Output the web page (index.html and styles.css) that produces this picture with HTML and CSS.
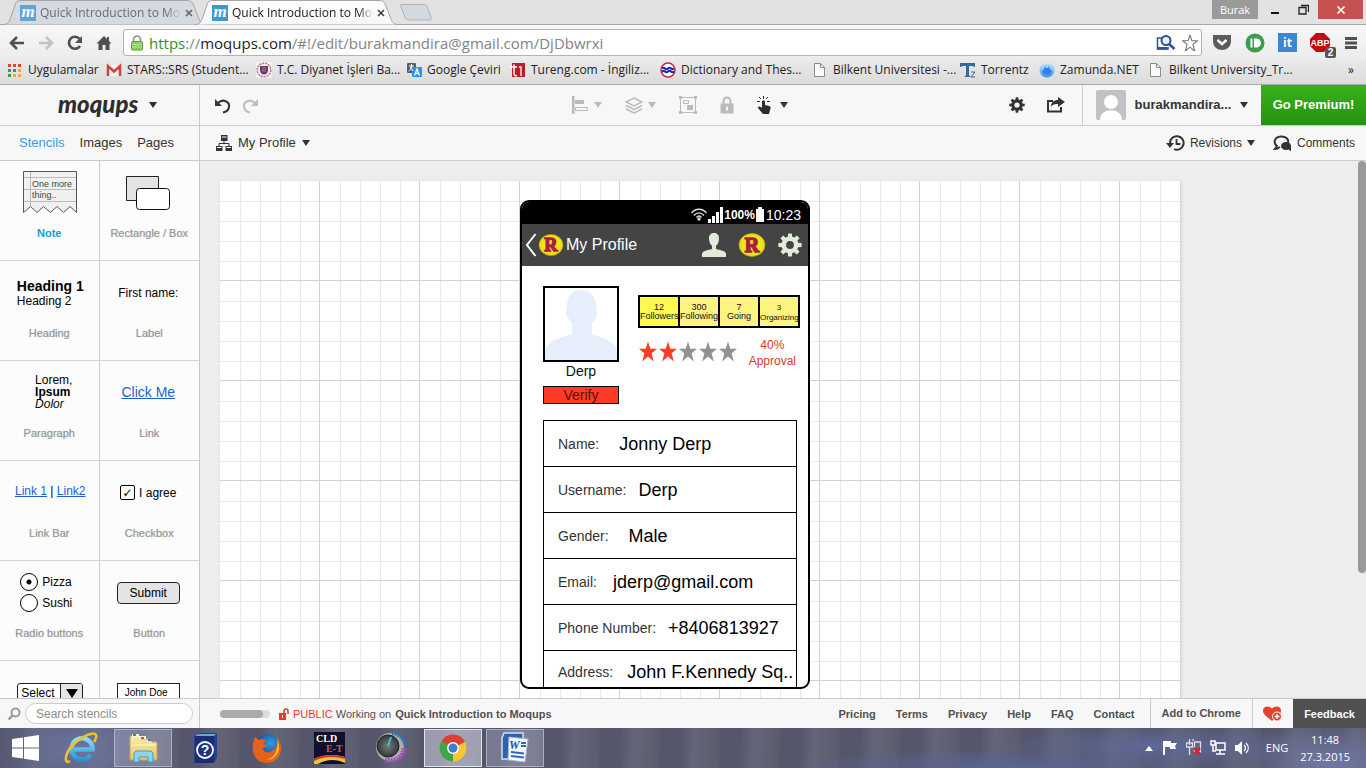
FILE: index.html
```html
<!DOCTYPE html>
<html lang="en">
<head>
<meta charset="utf-8">
<title>Quick Introduction to Moqups</title>
<link rel="stylesheet" href="styles.css">
</head>
<body>
<svg width="0" height="0" class="defs" aria-hidden="true">
  <defs>
    <linearGradient id="gTab" x1="0" y1="0" x2="0" y2="1"><stop offset="0" stop-color="#fdfdfd"/><stop offset="1" stop-color="#f6f6f6"/></linearGradient>
    <linearGradient id="gIE" gradientUnits="userSpaceOnUse" x1="0" y1="4" x2="0" y2="30"><stop offset="0" stop-color="#9be4fb"/><stop offset="1" stop-color="#1c8fd6"/></linearGradient>
    <linearGradient id="gFold" x1="0" y1="0" x2="0" y2="1"><stop offset="0" stop-color="#f9ecae"/><stop offset="1" stop-color="#e5c765"/></linearGradient>
    <radialGradient id="gFox" cx=".6" cy=".35" r=".6"><stop offset="0" stop-color="#2f9fe0"/><stop offset="1" stop-color="#1b3f87"/></radialGradient>
    <radialGradient id="gKnob"><stop offset="0" stop-color="#777d7d"/><stop offset="1" stop-color="#33383a"/></radialGradient>
    <linearGradient id="gZam" x1="0" y1="0" x2="0" y2="1"><stop offset="0" stop-color="#d5eafd"/><stop offset="1" stop-color="#3d8fe8"/></linearGradient>
    <radialGradient id="gR"><stop offset="0" stop-color="#fff12a"/><stop offset="1" stop-color="#eadc16"/></radialGradient>
    <symbol id="tabShape" viewBox="0 0 204 25"><path d="M0 24.500C5 24.500 6 22 7.500 18L12 5C13.500 1.500 14 .5 18 .5H184C188 .5 189 1.500 190.500 5L196 19C197.500 23 199 24.500 204 24.500" stroke="#a5a5a5"/></symbol>
    <symbol id="page" viewBox="0 0 16 16"><path d="M2.500 1.500h6l4 4v9h-10z" fill="#fafafa" stroke="#8b8b8b"/><path d="M8.500 1.500v4h4" fill="none" stroke="#8b8b8b"/></symbol>
    <symbol id="star" viewBox="0 0 20 20"><path d="M10 0l2.300 7.300H19l-5.400 4.400 2.200 8.300L10 15.100 4.200 20l2.200-8.300L1 7.300h6.700z"/></symbol>
    <symbol id="rlogo" viewBox="0 0 28 24"><ellipse cx="14" cy="12" rx="13" ry="11.500" fill="url(#gR)" stroke="#b3a516" stroke-width=".7"/><text x="14" y="19" text-anchor="middle" font-family="Liberation Serif, serif" font-weight="bold" font-size="20" fill="#a91f3d" stroke="#a91f3d" stroke-width="1.500">R</text><path d="M12 7.500h3v3h-3z" fill="#e9c93a"/></symbol>
    <symbol id="gear" viewBox="-12 -12 24 24"><circle r="6.200" fill="none" stroke="currentColor" stroke-width="4.600"/><g fill="currentColor"><path id="tooth" d="M-1.900-11.600h3.800l.4 4.600h-4.600z"/><use href="#tooth" transform="rotate(45)"/><use href="#tooth" transform="rotate(90)"/><use href="#tooth" transform="rotate(135)"/><use href="#tooth" transform="rotate(180)"/><use href="#tooth" transform="rotate(225)"/><use href="#tooth" transform="rotate(270)"/><use href="#tooth" transform="rotate(315)"/></g></symbol>
  </defs>
</svg>

<header class="browser">
  <div class="tabstrip">
    <div class="tab tab-idle">
      <svg class="tab-bg"><use href="#tabShape"/></svg>
      <span class="m-icon">m</span><span class="tab-title">Quick Introduction to Moqups</span>
      <button class="tab-close" aria-label="Close tab"><svg width="8" height="8"><path d="M1 1l6 6M7 1L1 7" stroke="#666" stroke-width="1.700"/></svg></button>
    </div>
    <div class="tab tab-active">
      <svg class="tab-bg"><use href="#tabShape"/></svg>
      <span class="m-icon">m</span><span class="tab-title">Quick Introduction to Moqups</span>
      <button class="tab-close" aria-label="Close tab"><svg width="8" height="8"><path d="M1 1l6 6M7 1L1 7" stroke="#444" stroke-width="1.700"/></svg></button>
    </div>
    <button class="newtab" aria-label="New tab"><svg width="34" height="17"><path d="M3.500.5h22c2 0 3 .5 4 3l3.500 10c.5 2 0 2.500-2 2.500h-20c-2 0-3-.5-4-3l-4-10c-.5-2-1.500-2.500.5-2.500z" fill="#d3d9e1" stroke="#b0b0b0"/></svg></button>
    <div class="window-controls">
      <span class="profile">Burak</span>
      <button aria-label="Minimize"><svg width="10" height="10"><path d="M1 8h8" stroke="#111" stroke-width="2"/></svg></button>
      <button aria-label="Restore"><svg width="11" height="11"><path d="M1 3.500h7v6.500H1zM3 1.500h7.500V8" fill="none" stroke="#222" stroke-width="1.300"/></svg></button>
      <button class="win-close" aria-label="Close"><svg width="10" height="10"><path d="M1.500 1.500l7 7M8.500 1.500l-7 7" stroke="#fff" stroke-width="1.700"/></svg></button>
    </div>
  </div>
  <div class="toolbar">
    <div class="nav">
      <button aria-label="Back"><svg width="18" height="16"><path d="M16 8H4M9 2L3 8l6 6" fill="none" stroke="#505050" stroke-width="2.600"/></svg></button>
      <button aria-label="Forward"><svg width="18" height="16"><path d="M2 8h12M9 2l6 6-6 6" fill="none" stroke="#c2c2c2" stroke-width="2.600"/></svg></button>
      <button aria-label="Reload"><svg width="18" height="16"><path d="M13.500 3.800A6 6 0 1 0 14 11" fill="none" stroke="#505050" stroke-width="2.700"/><path d="M16 1v7H9z" fill="#505050"/></svg></button>
      <button aria-label="Home"><svg width="18" height="16"><path d="M9 1L1.500 8.500h2V15h4v-5h3v5h4V8.500h2L14 6V2h-2v2z" fill="#505050"/></svg></button>
    </div>
    <div class="omnibox">
      <svg width="14" height="16"><path d="M3.500 8V4.500a3.500 3.500 0 0 1 7 0V8" fill="none" stroke="#929292" stroke-width="1.700"/><rect x="1.500" y="6.500" width="11" height="8.500" rx="1" fill="#8bd05d" stroke="#5da236"/><path d="M2 9.500h10M2 12h10" stroke="#b8e891"/></svg>
      <a class="url" href="#"><span class="secure">https</span>://<span class="host">moqups.com</span>/#!/edit/burakmandira@gmail.com/DjDbwrxi</a>
      <svg width="20" height="17"><path d="M6 4H1.500v11H12v-2" fill="none" stroke="#30509a" stroke-width="1.500"/><path d="M1 13h10v2.500H1z" fill="#30509a"/><circle cx="10" cy="6.500" r="4.500" fill="#e8f0ff" stroke="#30509a" stroke-width="2"/><path d="M13 10l5.500 5" stroke="#30509a" stroke-width="2.500"/></svg>
      <svg width="18" height="18" viewBox="-1 -1 22 22" fill="#fff" stroke="#777" stroke-width="1.400"><use href="#star" width="20" height="20" overflow="visible"/></svg>
    </div>
    <div class="extensions">
      <button aria-label="Pocket"><svg width="20" height="19"><path d="M1 2h18v6c0 12-18 12-18 0z" fill="#5b5b5b"/><path d="M5.500 7l4.500 4 4.500-4" fill="none" stroke="#fff" stroke-width="2.500"/></svg></button>
      <button aria-label="Pushbullet"><svg width="20" height="20"><circle cx="10" cy="10" r="9.500" fill="#3e9b4e"/><path d="M5.500 5.500h2v9h-2zM9 5.500h2.500a4.500 4.500 0 0 1 0 9H9z" fill="#fff"/></svg></button>
      <button class="ext-it" aria-label="Instant translate">it</button>
      <button class="ext-abp" aria-label="Adblock Plus"><svg width="21" height="20"><path d="M6 0h8l6 6v7l-6 6H6l-6-6V6z" fill="#c40a12"/><text x="10" y="13" text-anchor="middle" font-family="Liberation Sans, sans-serif" font-weight="bold" font-size="9" fill="#fff">ABP</text></svg><span class="ext-count">2</span></button>
      <button aria-label="Menu"><svg width="14" height="14"><path d="M1 2.500h12M1 7h12M1 11.500h12" stroke="#505050" stroke-width="3"/></svg></button>
    </div>
  </div>
  <nav class="bookmarks" aria-label="Bookmarks">
    <a href="#"><svg width="16" height="16"><path d="M1 2h3v3H1zM6 2h3v3H6z" fill="#d8453a"/><path d="M11 2h3v3h-3z" fill="#d8453a"/><path d="M1 7h3v3H1z" fill="#39964d"/><path d="M6 7h3v3H6z" fill="#3a7be0"/><path d="M11 7h3v3h-3zM11 12h3v3h-3zM6 12h3v3H6z" fill="#e7b226"/><path d="M1 12h3v3H1z" fill="#39964d"/></svg>Uygulamalar</a>
    <a href="#"><svg width="16" height="16"><path d="M1 3h14v11H1z" fill="#f4f1f0"/><path d="M2 14V4l6 5.500L14 4v10" fill="none" stroke="#cf4438" stroke-width="2.500"/></svg>STARS::SRS (Student...</a>
    <a href="#"><svg width="16" height="16"><rect width="16" height="16" fill="#f6eff1"/><circle cx="8" cy="8" r="6.800" fill="none" stroke="#ba778b" stroke-width="1.500" stroke-dasharray="2 1"/><path d="M4 4h8v4c0 6-8 6-8 0z" fill="#524474"/><path d="M6 5h4v5H6z" fill="#b44b5e"/></svg>T.C. Diyanet İşleri Ba...</a>
    <a href="#"><svg width="16" height="16"><rect x="1" y="1" width="9" height="10" rx="1" fill="#555e68"/><rect x="6" y="5" width="10" height="10" rx="1" fill="#2d91e8"/><path d="M3 4h5M5.500 2v2c0 3-1 4-3 5M4 5l3 4" stroke="#fff" fill="none"/><path d="M8.500 13.500L11 7l2.500 6.500M9.500 11.500h3" stroke="#fff" stroke-width="1.300" fill="none"/></svg>Google Çeviri</a>
    <a href="#"><svg width="16" height="16"><rect x="2" y="1" width="13" height="14" fill="#be1c2c"/><path d="M0 5h7M4 2.500v9c0 2 1 2.500 3 2" stroke="#fff" stroke-width="1.500" fill="none"/><path d="M9 5h2v9" stroke="#fff" stroke-width="1.300" fill="none"/></svg>Tureng.com - İngiliz...</a>
    <a href="#"><svg width="16" height="16"><circle cx="8" cy="8" r="7" fill="#fff" stroke="#d42533" stroke-width="1.500"/><path d="M2 6.500q1.500-1.500 3 0t3 0 3 0 3 0M2 9.500q1.500-1.500 3 0t3 0 3 0 3 0" fill="none" stroke="#1726b9" stroke-width="1.900"/></svg>Dictionary and Thes...</a>
    <a href="#"><svg width="16" height="16"><use href="#page"/></svg>Bilkent Universitesi -...</a>
    <a href="#"><svg width="16" height="16"><path d="M0 1h15v4h-1l-1-1H9v9c0 1 1 1 2 2H4c1-1 2-1 2-2V4H2L1 5H0z" fill="#356998"/><path d="M11 10h4l-4 5h4" fill="none" stroke="#356998"/></svg>Torrentz</a>
    <a href="#"><svg width="16" height="16"><circle cx="8" cy="8" r="7.500" fill="url(#gZam)"/><path d="M3 9c3-1 2-6 5-6s2 5 5 6c-1 5-9 5-10 0z" fill="#2e82e6"/><circle cx="8" cy="4.500" r="1.500" fill="#b8dcff"/></svg>Zamunda.NET</a>
    <a href="#"><svg width="16" height="16"><use href="#page"/></svg>Bilkent University_Tr...</a>
    <button aria-label="More bookmarks">»</button>
  </nav>
</header>

<main class="app">
  <aside class="sidebar">
    <div class="brand"><span class="logo">moqups</span><span class="caret"></span></div>
    <nav class="side-tabs"><a class="current" href="#">Stencils</a><a href="#">Images</a><a href="#">Pages</a></nav>
    <div class="stencils">
      <div class="cell"><div class="demo"><svg width="54" height="44"><path d="M.5 41.500V.5h53v41l-6.500-6-6.500 6-6.500-6-6.500 6-7-6-6.500 6-6.500-6z" fill="#f0f0f0" stroke="#555"/><path d="M1 6.500h52M1 18.500h52M1 30.500h52M7.500 1v34" stroke="#bbb"/><text x="9" y="16" class="note-text">One more</text><text x="9" y="27" class="note-text">thing..</text></svg></div><span class="cap cap-on">Note</span></div>
      <div class="cell"><div class="demo"><svg width="46" height="36"><path d="M1.500 1.500h32v24h-32z" fill="#e4e4e4" stroke="#222"/><rect x="11.500" y="13.500" width="33" height="21" rx="3" fill="#fff" stroke="#111"/></svg></div><span class="cap">Rectangle / Box</span></div>
      <div class="cell"><div class="demo"><div class="d-head"><b>Heading 1</b><br>Heading 2</div></div><span class="cap">Heading</span></div>
      <div class="cell"><div class="demo">First name:</div><span class="cap">Label</span></div>
      <div class="cell"><div class="demo"><div class="d-par">Lorem,<br><b>Ipsum</b><br><i>Dolor</i></div></div><span class="cap">Paragraph</span></div>
      <div class="cell"><div class="demo"><a class="d-link" href="#">Click Me</a></div><span class="cap">Link</span></div>
      <div class="cell"><div class="demo d-bar"><a href="#">Link 1</a> | <a href="#">Link2</a></div><span class="cap">Link Bar</span></div>
      <div class="cell"><div class="demo"><label class="choice"><input type="checkbox" checked>I agree</label></div><span class="cap">Checkbox</span></div>
      <div class="cell"><div class="demo d-radios"><label class="choice"><input type="radio" name="food" checked>Pizza</label><label class="choice"><input type="radio" name="food">Sushi</label></div><span class="cap">Radio buttons</span></div>
      <div class="cell"><div class="demo"><button class="d-submit">Submit</button></div><span class="cap">Button</span></div>
      <div class="cell"><div class="demo"><div class="d-select"><select aria-label="Select"><option>Select</option></select><svg width="22" height="20"><path d="M5 5h12l-6 9z"/></svg></div></div></div>
      <div class="cell"><div class="demo"><input class="d-input" type="text" value="John Doe" aria-label="Text input"></div></div>
    </div>
    <div class="search"><svg width="14" height="14"><circle cx="8.500" cy="5.500" r="4" fill="none" stroke="#999" stroke-width="2"/><path d="M5.500 8.500L1.500 12.500" stroke="#999" stroke-width="2.400"/></svg><input type="search" placeholder="Search stencils" aria-label="Search stencils"></div>
  </aside>

  <section class="editor">
    <div class="topbar">
      <div class="history">
        <button aria-label="Undo"><svg width="18" height="17"><path d="M4 6c5-5 12-1 11 4-.5 3-3 5-6 5.500" fill="none" stroke="#333" stroke-width="2"/><path d="M1 2v7h7z" fill="#333"/></svg></button>
        <button aria-label="Redo"><svg width="18" height="17"><path d="M14 6C9 1 2 5 3 10c.5 3 3 5 6 5.500" fill="none" stroke="#bdbdbd" stroke-width="2"/><path d="M17 2v7h-7z" fill="#bdbdbd"/></svg></button>
      </div>
      <div class="tools">
        <button class="dim" aria-label="Align"><svg width="18" height="18"><path d="M1 0h2.500v18H1zM4 4h9v4H4z" fill="currentColor"/><path d="M4.500 11.500h12v3h-12z" fill="none" stroke="currentColor"/></svg><span class="caret"></span></button>
        <button class="dim" aria-label="Arrange"><svg width="18" height="17" fill="none" stroke="currentColor" stroke-width="1.400"><path d="M9 1l8 4-8 4-8-4zM1 8.500l8 4 8-4M1 12l8 4 8-4"/></svg><span class="caret"></span></button>
        <button class="dim" aria-label="Group"><svg width="18" height="18" fill="none" stroke="currentColor"><path d="M1.500 1.500h15v15h-15z"/><path d="M4.500 4.500h5v3h-5z"/><path d="M8 9h6v5H8zM0 0h3v3H0zM15 0h3v3h-3zM0 15h3v3H0zM15 15h3v3h-3z" fill="currentColor" stroke="none"/></svg></button>
        <button class="dim" aria-label="Lock"><svg width="14" height="18"><path d="M3.500 9V5a3.500 3.500 0 0 1 7 0v4" fill="none" stroke="currentColor" stroke-width="2"/><path d="M.5 7.500h13v10H.5z" fill="currentColor"/><path d="M7 10.500v4" stroke="#f7f7f7" stroke-width="2"/></svg></button>
        <button aria-label="Interact"><svg width="14" height="18"><path d="M5 5c2-1 3 0 3 1v3l4 1c2 .5 2 2 1 4l-1 4H6L1 12c0-2 2-2 4 0z" fill="#2d2d2d"/><path d="M6.500 0v3M2 1l2 2M11 1L9 3M0 5.500h3M10 5.500h3" stroke="#2d2d2d"/></svg><span class="caret caret-far"></span></button>
      </div>
      <div class="actions">
        <button aria-label="Settings"><svg width="16" height="16" color="#333"><use href="#gear"/></svg></button>
        <button aria-label="Share"><svg width="19" height="16"><path d="M7 4H2v10.500h13V10" fill="none" stroke="#333" stroke-width="2"/><path d="M5 10c0-5 3-7 7-7V0l7 5-7 5V7c-3 0-5 0-7 3z" fill="#333"/></svg></button>
      </div>
      <button class="account"><svg width="30" height="30"><rect width="30" height="30" rx="2" fill="#c2c2c2"/><circle cx="15" cy="12" r="7" fill="#fff"/><path d="M4 30c0-13 22-13 22 0z" fill="#fff"/></svg><span>burakmandira...</span><span class="caret"></span></button>
      <button class="premium">Go Premium!</button>
    </div>
    <div class="subbar">
      <button><svg width="16" height="16"><path d="M5 0h6.500v6H5zM0 11h6.500v5H0zM9.500 11H16v5H9.500z" fill="#333"/><path d="M8 6v2.500M3 11V8.500h10V11" fill="none" stroke="#333"/><path d="M6 2h4.500M1 12.500h4.500M10.500 12.500H15" stroke="#fff"/></svg><span>My Profile</span><span class="caret"></span></button>
      <div class="sub-right">
        <button class="small"><svg width="19" height="16"><path d="M4 8a6.800 6.800 0 1 1 4 6.200" fill="none" stroke="#333" stroke-width="2"/><path d="M0 8h8l-4 5z" fill="#333"/><path d="M10.500 4v5h4" fill="none" stroke="#333" stroke-width="1.800"/></svg><span>Revisions</span><span class="caret"></span></button>
        <button class="small"><svg width="19" height="17"><path d="M4 11C0 8 1 2 8 1.500c5-.3 8 3 7 6.500M4 10c0 2-1 3-2 4 2 0 3-.5 5-2" fill="none" stroke="#333" stroke-width="2"/><ellipse cx="13" cy="11" rx="5" ry="4" fill="#333"/><path d="M14 13l4 3.500V11z" fill="#333"/></svg><span>Comments</span></button>
      </div>
    </div>
    <div class="workspace">
      <div class="sheet">
        <article class="phone">
          <div class="status">
            <svg width="16" height="13" fill="none" stroke="#ddd" stroke-width="1.300"><path d="M.5 5c4-5 11-5 15 0M3 7.500c3-3.500 7-3.500 10 0M5.500 9.500c1.500-2 3.500-2 5 0"/><circle cx="8" cy="11" r="1" fill="#fff"/></svg>
            <svg width="15" height="16" fill="#fff"><path d="M0 12h3v4H0zM4 9h3v7H4zM8 5h3v11H8zM12 0h3v16h-3z"/></svg>
            <b>100%</b>
            <svg width="8" height="15" fill="#fff"><path d="M0 2h2V0h4v2h2v13H0z"/></svg>
            <span class="clock">10:23</span>
          </div>
          <div class="appbar">
            <button aria-label="Back"><svg width="12" height="26"><path d="M10.500 2L2 13l8.500 11" fill="none" stroke="#fff" stroke-width="2"/></svg></button>
            <svg width="26" height="22"><use href="#rlogo"/></svg>
            <h1>My Profile</h1>
            <div class="appbar-icons">
              <svg width="24" height="24" fill="#dfecd8"><path d="M12 0c3 0 5 2 5 5 0 4-1 6-3 8v3c4 1 10 2 10 5v3H0v-3c0-3 6-4 10-5v-3C8 11 7 9 7 5c0-3 2-5 5-5z"/></svg>
              <svg width="28" height="24"><use href="#rlogo"/></svg>
              <svg width="24" height="24" color="#dfecd8"><use href="#gear"/></svg>
            </div>
          </div>
          <div class="profile-head">
            <div class="who">
              <div class="avatar"><svg width="72" height="72" fill="#e6edfb"><path d="M36 2c9 0 15 6 15 15 0 3 1 6 1 9-1 5-3 6-5 9v11c9 4 24 6 25 18v8H0v-8c1-12 17-14 27-18V35c-2-3-4-4-6-9 0-3 1-6 1-9C22 8 28 2 36 2z"/></svg></div>
              <div class="nick">Derp</div>
              <button class="verify">Verify</button>
            </div>
            <div class="stats-col">
              <div class="stats"><div class="hot">12<br>Followers</div><div>300<br>Following</div><div>7<br>Going</div><div class="tiny">3<br>Organizing</div></div>
              <div class="rating">
                <div class="stars"><svg class="lit"><use href="#star"/></svg><svg class="lit"><use href="#star"/></svg><svg><use href="#star"/></svg><svg><use href="#star"/></svg><svg><use href="#star"/></svg></div>
                <div class="approval">40%<br>Approval</div>
              </div>
            </div>
          </div>
          <dl class="fields">
            <div class="wide"><dt>Name:</dt><dd>Jonny Derp</dd></div>
            <div><dt>Username:</dt><dd>Derp</dd></div>
            <div class="wide"><dt>Gender:</dt><dd>Male</dd></div>
            <div class="mid"><dt>Email:</dt><dd>jderp@gmail.com</dd></div>
            <div><dt>Phone Number:</dt><dd>+8406813927</dd></div>
            <div><dt>Address:</dt><dd>John F.Kennedy Sq..</dd></div>
          </dl>
        </article>
      </div>
      <div class="scroll-thumb"></div>
    </div>
    <footer class="footer">
      <div class="hscroll"><div></div></div>
      <svg width="12" height="12"><path d="M1 5h7v7H1z" fill="#dd4125"/><path d="M6 5V3a2 2 0 0 1 4 0v3" fill="none" stroke="#dd4125" stroke-width="1.600"/><path d="M4.500 7v3" stroke="#fff"/></svg>
      <span class="public">PUBLIC</span><span class="working">Working on</span><b>Quick Introduction to Moqups</b>
      <nav class="foot-links"><a href="#">Pricing</a><a href="#">Terms</a><a href="#">Privacy</a><a href="#">Help</a><a href="#">FAQ</a><a href="#">Contact</a></nav>
      <a class="foot-box" href="#">Add to Chrome</a>
      <button class="heart" aria-label="Love"><svg width="20" height="16"><path d="M9 15C3 10 0 8 0 4.500 0 0 6-1 9 2.500 12-1 18 0 18 4.500 18 8 15 10 9 15z" fill="#e0452c"/><circle cx="14" cy="10.500" r="4.500" fill="#e0452c" stroke="#fff"/><path d="M14 8v5M11.500 10.500h5" stroke="#fff" stroke-width="1.300"/></svg></button>
      <button class="feedback">Feedback</button>
    </footer>
  </section>
</main>

<div class="taskbar">
  <button class="start" aria-label="Start"><svg width="27" height="26" fill="#fff"><path d="M0 4l11-1.500v10H0zM12 2.300L27 0v12.500H12zM0 13.500h11v10L0 22zM12 13.500h15V26l-15-2.300z"/></svg></button>
  <button aria-label="Internet Explorer"><svg width="34" height="32"><path d="M9 17.500H28.500A10.500 10.500 0 1 0 26.500 23" fill="none" stroke="url(#gIE)" stroke-width="4.500"/><path d="M6 29c-6 4-6-7 3-16C18 4 30-1 32 3c1 2 0 4-2 7" fill="none" stroke="#f3c21d" stroke-width="2.500"/></svg></button>
  <button class="open" aria-label="File Explorer"><svg width="30" height="32"><path d="M2 4h9l2 3h9l2 3h5v18H2z" fill="url(#gFold)" stroke="#c7a64d"/><path d="M4 2h7v3H4zM11 4h7v3h-7z" fill="#f7f3df"/><path d="M5 2h3v2H5z" fill="#3a9b3a"/><path d="M13 5h3v2h-3z" fill="#d34a30"/><path d="M20 7h3v2h-3z" fill="#3b77cf"/><path d="M3 13h25" stroke="#fff6cc"/><path d="M6 30V21l2-2h15l2 2v9h-5v-5h-9v5z" fill="#8fd3ef" stroke="#4499c3"/></svg></button>
  <button aria-label="Help"><svg width="26" height="32"><path d="M2 4l4-3h19v25l-3 5H2z" fill="#24418e"/><path d="M3 4h19v27H3z" fill="#1a2e76"/><path d="M3 4l3-2h18l-2 2z" fill="#6fa4d6"/><circle cx="13" cy="18" r="8" fill="#1e3580" stroke="#fff" stroke-width="1.800"/><text x="13" y="23" text-anchor="middle" font-family="Liberation Sans, sans-serif" font-weight="bold" font-size="14" fill="#fff">?</text></svg></button>
  <button aria-label="Firefox"><svg width="30" height="32"><circle cx="16" cy="15" r="13" fill="url(#gFox)"/><path d="M3 5l4 3c3-2 6-1 7 1l-3 3c2 0 4 1 4 2l-4 2c0 4 5 6 9 3 5-3 7-9 4-15 10 10 5 27-9 27C1 31-2 17 3 5z" fill="#e5611c"/><path d="M25 8c5 9 0 20-11 20 8-1 13-10 11-20z" fill="#f9bd3a"/></svg></button>
  <button aria-label="CLD E-T"><svg width="31" height="32"><path d="M0 0h31v32H0z" fill="#11102c"/><text x="2" y="10" font-family="Liberation Serif, serif" font-weight="bold" font-size="10" fill="#fff">CLD</text><text x="12" y="20" font-family="Liberation Serif, serif" font-weight="bold" font-size="10" fill="#d05068">E-T</text><path d="M0 32V27c10-5 20-5 31-2v7z" fill="#e8c340"/><path d="M0 27c10-5 20-5 31-2v2c-11-3-21-3-31 2z" fill="#d83232"/><path d="M4 32c9-5 18-5 27-1v1z" fill="#11102c"/></svg></button>
  <button aria-label="Audio control"><svg width="32" height="34"><circle cx="15" cy="16" r="14" fill="#aeb0ac"/><path d="M17 2a14 14 0 0 1 13 12" fill="none" stroke="#2e77b6" stroke-width="4" stroke-dasharray="2 1"/><path d="M29 17c0 8-9 15-19 12" fill="none" stroke="#a44fc0" stroke-width="5" stroke-dasharray="2 1"/><circle cx="13" cy="15" r="11" fill="url(#gKnob)" stroke="#202527"/><path d="M13 15l3-9" stroke="#46bcd0" stroke-width="2"/></svg></button>
  <button class="open active" aria-label="Chrome"><svg width="28" height="30" viewBox="-14 -15 28 30"><path d="M0 0L-11.700-6.700A13.500 13.500 0 0 1 12-6z" fill="#dc4034"/><path d="M0 0L12-6A13.500 13.500 0 0 1 0 13.500z" fill="#f6c92c"/><path d="M0 0V13.500A13.500 13.500 0 0 1-11.700-6.700z" fill="#3fa64b"/><path d="M0-6H12l-12 1z" fill="#dc4034"/><circle r="6" fill="#fff"/><circle r="4.500" fill="#3c7fc9"/></svg></button>
  <button class="open" aria-label="Word"><svg width="28" height="32"><path d="M3 1h19v26H1V6z" fill="#2f61ac" stroke="#cfe0f6" stroke-width="1.500"/><path d="M8 5l19 2-3 23-17-2z" fill="#f5f8fd" stroke="#9fb6d8"/><text x="8" y="17" font-family="Liberation Serif, serif" font-weight="bold" font-style="italic" font-size="12" fill="#224f9f">W</text><path d="M20 11h5M20 14h5M10 20l13 1.500M10 24l13 1.500" stroke="#3267b5" stroke-width="1.800"/></svg></button>
  <div class="tray">
    <svg width="10" height="6"><path d="M1 6l4-5 4 5z" fill="#fff"/></svg>
    <svg width="16" height="17"><path d="M2 2v14" stroke="#fff" stroke-width="2"/><path d="M3 2h6v2h6l-2 3 1 3H8V8H3z" fill="#fff"/></svg>
    <svg width="16" height="18"><path d="M3.500 0v6M.5 4v4h6V4zM3.500 8v8M7 2V0M8.500 3h6v10h-6z" fill="none" stroke="#ddd" stroke-width="1.300"/><path d="M8 9l6 6M14 9l-6 6" stroke="#d4262e" stroke-width="2.500"/></svg>
    <svg width="16" height="16"><path d="M6 3h9v7H6zM10 10v4M6 14h9M1 1h4v4H1zM3 5v6h3" fill="none" stroke="#fff" stroke-width="1.500"/></svg>
    <svg width="16" height="16"><path d="M1 5h3l4-4v14l-4-4H1z" fill="#fff"/><path d="M10 5c2 2 2 4 0 6M12 3c3 3 3 7 0 10" fill="none" stroke="#fff" stroke-width="1.200"/></svg>
    <span class="lang">ENG</span>
    <time class="when">11:48<br>27.3.2015</time>
  </div>
</div>
</body>
</html>
```
FILE: styles.css
```css
* { box-sizing: border-box; }
html, body { height: 100%; }
body {
  margin: 0;
  display: flex;
  flex-direction: column;
  overflow: hidden;
  background: #f7f7f7;
  color: #333;
  font: 13px/16px "Liberation Sans", Arial, sans-serif;
}
button { border: 0; padding: 0; background: none; font: inherit; color: inherit; display: flex; align-items: center; justify-content: center; }
svg { display: block; flex: none; }
a { color: inherit; text-decoration: none; }
.defs { position: absolute; }
.caret { border: 4px solid transparent; border-top: 6px solid currentColor; border-bottom: 0; }
.caret-far { margin-left: 4px; }

/* Browser chrome */
.browser { flex: none; font-family: "Open Sans", "Noto Sans", sans-serif; font-size: 12px; color: #222; background: #e2e2e2; }
.tabstrip { display: flex; height: 25px; border-bottom: 1px solid #a8a8a8; padding-left: 3px; }
.tab { position: relative; width: 204px; height: 25px; display: flex; align-items: center; padding: 0 12px 0 17px; gap: 4px; }
.tab > * { position: relative; }
.tab .tab-bg { position: absolute; left: 0; top: 0; width: 204px; height: 25px; fill: #d5dae2; }
.tab-idle { color: #6b6b70; }
.tab-active { margin-left: -12px; z-index: 1; }
.tab-active .tab-bg { fill: url(#gTab); }
.m-icon { width: 16px; height: 16px; background: #3f97d3; color: #fff; font: italic bold 17px/13px "Liberation Serif", serif; text-align: center; }
.tab-idle .m-icon { background: #5ea5d6; }
.tab-title { flex: 1; overflow: hidden; white-space: nowrap; -webkit-mask-image: linear-gradient(90deg, #000 90%, transparent); mask-image: linear-gradient(90deg, #000 90%, transparent); }
.tab-close { margin-right: 2px; }
.newtab { margin-left: -1px; }
.window-controls { margin-left: auto; display: flex; align-items: flex-start; padding-right: 3px; }
.window-controls > * { height: 19px; width: 29px; display: flex; align-items: center; justify-content: center; }
.window-controls .profile { width: 46px; background: #9a9a9a; color: #fff; font-size: 11px; margin-right: 2px; }
.window-controls .win-close { width: 45px; background: #c75050; }
.toolbar { display: flex; align-items: center; height: 34px; padding: 1px 8px 0; background: linear-gradient(#f7f7f7, #ececec); }
.nav { display: flex; gap: 11px; width: 115px; }
.omnibox { flex: 1; height: 27px; display: flex; align-items: center; gap: 5px; background: #fff; border: 1px solid #b3b3b3; border-radius: 3px; padding: 0 2px 0 6px; }
.url { flex: 1; font-size: 15px; line-height: 20px; color: #848484; white-space: nowrap; }
.secure { color: #2f8f2f; }
.host { color: #222; }
.extensions { display: flex; align-items: center; gap: 13px; margin-left: 10px; }
.ext-it { width: 19px; height: 19px; background: #3a87d4; color: #fff; font-weight: 700; }
.ext-abp { position: relative; }
.ext-count { position: absolute; right: -5px; bottom: -5px; width: 11px; height: 11px; background: #555; border-radius: 2px; color: #fff; font: bold 10px/11px "Liberation Sans", sans-serif; }
.bookmarks { display: grid; grid-template-columns: 99px 150px 150px 104px 150px 152px 148px 79px 109px 1fr auto; align-items: center; height: 26px; padding: 0 12px 3px 7px; background: linear-gradient(#e9e9e9, #dcdcdc); border-bottom: 1px solid #a9a9a9; }
.bookmarks a { display: flex; align-items: center; gap: 5px; white-space: nowrap; }

/* App */
.app { flex: 1; min-height: 0; display: flex; }
.sidebar { flex: none; width: 200px; display: flex; flex-direction: column; border-right: 1px solid #c8c8c8; }
.brand { flex: none; display: flex; align-items: center; height: 41px; padding-left: 58px; gap: 11px; border-bottom: 1px solid #ccc; color: #2e2e2e; }
.logo { font: italic 900 24px/24px Lato, sans-serif; padding-bottom: 3px; }
.side-tabs { flex: none; display: flex; height: 35px; align-items: center; padding: 0 19px; gap: 15px; border-bottom: 1px solid #ccc; }
.side-tabs .current { color: #3b9bd9; }
.stencils { flex: 1; min-height: 0; overflow: hidden; display: grid; grid-template-columns: 1fr 1fr; grid-auto-rows: 100px; background: #fcfcfc; color: #000; font-size: 12px; line-height: 14px; }
.cell { border-bottom: 1px solid #d4d4d4; border-right: 1px solid #ccc; display: flex; flex-direction: column; align-items: center; }
.cell:nth-child(even) { border-right: 0; }
.demo { flex: none; height: 64px; display: flex; align-items: center; justify-content: center; white-space: pre; padding: 0 0 1px 2px; }
.cell:nth-child(even) .demo { padding: 0 2px 1px 0; }
.cap { font-size: 11px; color: #999; line-height: 16px; text-shadow: 0 0 1px #bbb; }
.cap-on { color: #12a0d7; font-weight: bold; text-shadow: none; }
.note-text { font-size: 9px; fill: #444; }
.d-head { padding-top: 2px; }
.d-head b { font-size: 14px; }
.d-par { line-height: 12px; padding: 0 0 2px 7px; }
.demo a { color: #1c5fd6; text-decoration: underline; }
.demo .d-link { font-size: 14px; padding-bottom: 2px; }
.d-bar { padding-bottom: 4px; }
.choice { display: flex; align-items: center; gap: 4px; }
.choice input { appearance: none; margin: 0; background: #fff; border: 1px solid #000; }
.choice input[type=checkbox] { width: 15px; height: 15px; border-radius: 2px; display: grid; place-items: center; }
.choice input[type=checkbox]::after { content: "✓"; font: 12px/12px "DejaVu Sans", sans-serif; }
.choice input[type=radio] { width: 18px; height: 18px; border-radius: 50%; }
.choice input[type=radio]:checked { background: radial-gradient(circle, #000 2px, #fff 3px); }
.demo.d-radios { flex-direction: column; align-items: flex-start; gap: 3px; padding: 0 6px 2px 0; }
.d-submit { width: 63px; height: 22px; background: #e4e4e4; border: 1px solid #222; border-radius: 4px; }
.d-select { display: flex; height: 20px; border: 1px solid #222; border-radius: 3px; overflow: hidden; background: #fff; }
.d-select select { appearance: none; border: 0; background: none; font: inherit; width: 42px; padding: 0 3px; }
.d-select svg { background: #e4e4e4; border-left: 1px solid #222; }
.d-input { width: 63px; height: 20px; border: 1px solid #222; font: 10px "Liberation Sans", sans-serif; padding: 0 7px; background: #fff; }
.search { flex: none; display: flex; align-items: center; height: 30px; gap: 4px; padding: 0 6px 0 7px; border-top: 1px solid #c8c8c8; }
.search input { flex: 1; min-width: 0; height: 21px; border: 1px solid #ccc; border-radius: 11px; padding: 0 10px; font: 12px "Liberation Sans", sans-serif; background: #fff; outline: 0; }
.search input::placeholder { color: #8c8c8c; }

.editor { flex: 1; min-width: 0; display: flex; flex-direction: column; }
.topbar { flex: none; display: flex; height: 41px; border-bottom: 1px solid #ccc; }
.history { display: flex; gap: 9px; padding-left: 14px; flex: 9 1 0; }
.tools { display: flex; gap: 23px; }
.tools button { gap: 5px; }
.dim { color: #bbb; }
.actions { flex: 7 1 0; display: flex; justify-content: flex-end; gap: 21px; padding-right: 17px; }
.account { width: 179px; border-left: 1px solid #ccc; gap: 9px; font-weight: bold; }
.premium { width: 105px; height: 40px; background: linear-gradient(#38b01c, #259310); color: #fff; font-weight: bold; white-space: nowrap; }
.subbar { flex: none; display: flex; align-items: center; justify-content: space-between; height: 35px; padding: 0 11px 0 16px; border-bottom: 1px solid #ccc; }
.subbar button { gap: 6px; }
.sub-right { display: flex; gap: 18px; }
.sub-right .small { gap: 5px; font-size: 12px; }
.workspace { flex: 1; min-height: 0; position: relative; overflow: hidden; padding: 20px 186px 0 20px; background: #ededed; }
.sheet {
  height: 100%;
  padding: 19px 0 0 300px;
  background-color: #fff;
  box-shadow: 1px 1px 3px #ccc;
  background-image:
    linear-gradient(90deg, transparent 99px, #d2d2d2 99px),
    linear-gradient(transparent 99px, #d2d2d2 99px),
    linear-gradient(90deg, transparent 20px, #e8e8e8 20px 21px, transparent 21px 40px, #e8e8e8 40px 41px, transparent 41px 60px, #e8e8e8 60px 61px, transparent 61px 80px, #e8e8e8 80px 81px, transparent 81px),
    linear-gradient(transparent 20px, #e8e8e8 20px 21px, transparent 21px 40px, #e8e8e8 40px 41px, transparent 41px 60px, #e8e8e8 60px 61px, transparent 61px 80px, #e8e8e8 80px 81px, transparent 81px);
  background-size: 100px 100px;
}
.scroll-thumb { position: absolute; right: 0; top: 0; width: 8px; height: 412px; border-radius: 4px; background: #999; }

/* Mockup */
.phone { width: 290px; height: 489px; overflow: hidden; border: 2px solid #000; border-radius: 9px; background: #fff; color: #111; }
.status { display: flex; align-items: center; justify-content: flex-end; gap: 1px; height: 22px; padding: 3px 7px 0 0; background: #000; color: #fff; font-size: 12px; }
.clock { font-size: 14px; padding-left: 1px; }
.appbar { display: flex; align-items: center; height: 42px; padding: 0 6px 0 3px; gap: 1px; margin: 0 -2px; border: solid #444; border-width: 0 2px; background: #444; color: #fff; }
.appbar h1 { margin: 0; padding-left: 1px; font-size: 16px; font-weight: normal; }
.appbar-icons { margin-left: auto; display: flex; align-items: center; gap: 12px; }
.profile-head { display: flex; gap: 19px; padding: 20px 0 0 21px; }
.who { width: 76px; text-align: center; font-size: 14px; }
.avatar { height: 76px; border: 2px solid #000; }
.nick { padding: 1px 0 7px; }
.verify { width: 100%; height: 18px; background: #ff3b25; border: 1px solid #000; color: #511; }
.stats-col { padding-top: 9px; }
.stats { display: grid; grid-template-columns: 38px 40px 40px 40px; width: 162px; height: 33px; border: 2px solid #000; background: #fdf380; font-size: 9px; line-height: 9px; text-align: center; }
.stats div { padding-top: 6px; white-space: nowrap; border-left: 2px solid #000; }
.stats div:first-child { border-left: 0; }
.stats .hot { background: #fdf94d; }
.stats .tiny { font-size: 8px; line-height: 10px; }
.rating { display: flex; justify-content: space-between; padding-top: 9px; }
.stars { display: flex; padding-top: 4px; }
.stars svg { width: 20px; height: 21px; fill: #919191; }
.stars svg.lit { fill: #ff3b25; }
.approval { color: #d8382c; font-size: 12px; text-align: center; padding-right: 4px; }
.fields { margin: 16px 11px 0 21px; border: 1px solid #000; }
.fields div { display: flex; align-items: center; height: 46px; gap: 12px; padding: 1px 0 0 14px; border-bottom: 1px solid #000; white-space: nowrap; }
.fields div:last-child { padding: 0 0 3px 14px; gap: 14px; }
.fields .wide { gap: 20px; }
.fields .mid { gap: 16px; }
.fields dt { font-size: 14px; color: #333; }
.fields dd { margin: 0; font-size: 18px; line-height: 20px; color: #000; }

.footer { flex: none; display: flex; align-items: center; height: 30px; border-top: 1px solid #c8c8c8; padding-left: 20px; font-size: 11px; color: #505050; white-space: nowrap; }
.hscroll { width: 50px; height: 8px; border-radius: 4px; background: #ddd; margin-right: 8px; }
.hscroll div { width: 86%; height: 8px; border-radius: 4px; background: #aaa; }
.public { color: #dd4125; margin: 0 3px; }
.working { margin-right: 4px; }
.foot-links { margin-left: auto; display: flex; gap: 20px; padding-right: 15px; font-weight: bold; }
.foot-box { font-weight: bold; padding: 0 11px; height: 29px; line-height: 29px; border: solid #ccc; border-width: 0 1px; }
.heart { width: 40px; }
.feedback { width: 73px; height: 29px; background: #505050; color: #fff; font-weight: bold; }

/* Desktop taskbar */
.taskbar {
  flex: none; display: flex; align-items: center; height: 40px; padding-bottom: 1px; color: #fff;
  font-family: "Open Sans", sans-serif; font-size: 11px;
  background:
    radial-gradient(ellipse 90px 40px at 1330px 35px, #7078a6, transparent),
    radial-gradient(ellipse 160px 20px at 1160px 18px, #5d6999, transparent),
    radial-gradient(ellipse 240px 20px at 1020px 40px, #5b6594, transparent),
    radial-gradient(ellipse 90px 50px at 80px 20px, #6c75a0, transparent),
    repeating-linear-gradient(92deg, #55566c 0 20px, #646579 34px, #5b5b6e 60px);
}
.taskbar > button { width: 62px; height: 38px; }
.taskbar > .start { width: 50px; }
.taskbar > .open { width: 58px; margin: 0 2px; background: rgba(200, 205, 230, .3); border: 1px solid rgba(220, 225, 240, .5); }
.taskbar > .active { background: rgba(225, 228, 240, .5); border-color: #e4e4ee; }
.tray { margin-left: auto; display: flex; align-items: center; gap: 8px; padding-right: 16px; }
.lang { margin-left: 8px; }
.when { text-align: center; margin-left: 4px; line-height: 17px; }
```
